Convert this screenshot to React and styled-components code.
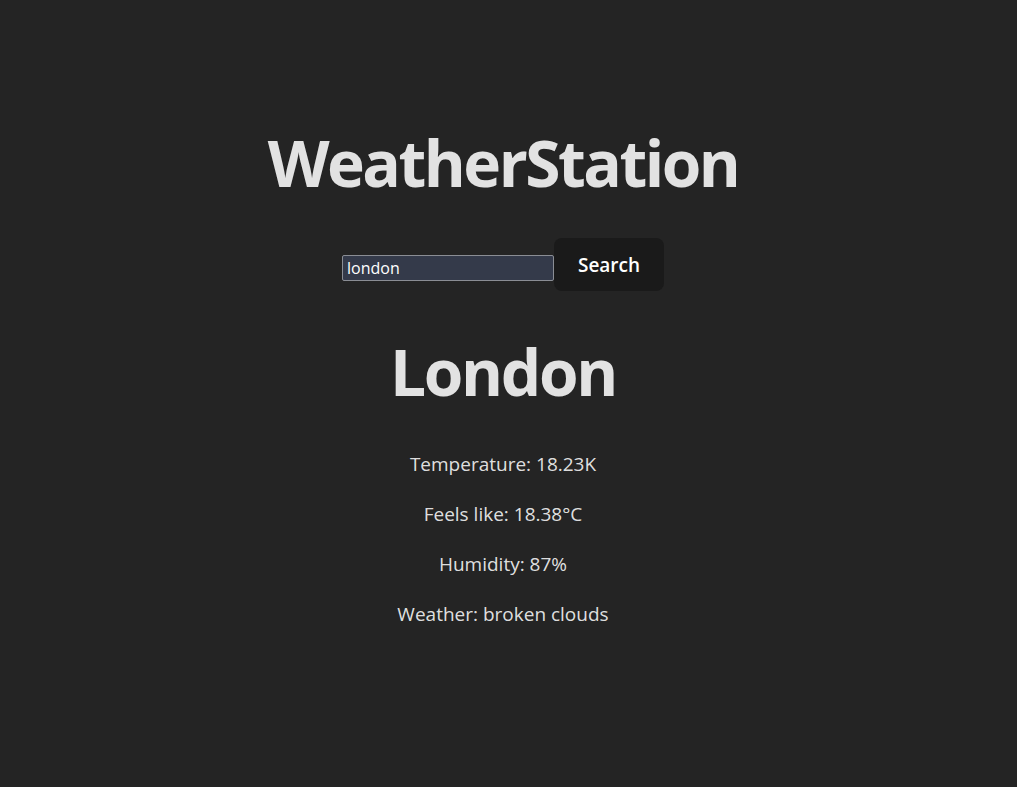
import React from "react";
import styled, { createGlobalStyle } from "styled-components";

const Global = createGlobalStyle`
  html, body { margin: 0; padding: 0; }
  body {
    background: #242424;
    color: rgba(255,255,255,0.87);
    font-family: "Open Sans", "Noto Sans", sans-serif;
    font-size: 20px;
    line-height: 1.5;
    min-height: 100vh;
  }
`;

const Page = styled.main`
  display: flex;
  flex-direction: column;
  align-items: center;
  padding: 128px 11px 0 0;
  text-align: center;
`;

const Title = styled.h1`
  font-size: 64px;
  line-height: 1.1;
  font-weight: 700;
  margin: 0 0 40px;
  letter-spacing: -2.5px;
`;

const Form = styled.form`
  display: flex;
  align-items: center;
`;

const Input = styled.input`
  width: 212px;
  height: 26px;
  margin-top: 7px;
  box-sizing: border-box;
  background: #343a4a;
  border: 1px solid #8a8d94;
  border-radius: 2px;
  color: #fff;
  font-family: "Open Sans", sans-serif;
  font-size: 16px;
  padding: 0 4px;
  outline: none;
`;

const Button = styled.button`
  width: 110px;
  height: 53px;
  border: 1px solid transparent;
  border-radius: 8px;
  background: #1a1a1a;
  color: #fff;
  font-family: "Open Sans", sans-serif;
  font-size: 19px;
  font-weight: 600;
  cursor: pointer;
`;

const City = styled.h2`
  font-size: 64px;
  line-height: 1.1;
  font-weight: 700;
  margin: 46px 0 41px;
  letter-spacing: -2.3px;
`;

const Info = styled.p`
  margin: 0 0 20px;
  font-size: 19px;
  line-height: 30px;
`;

export default function App() {
  return (
    <>
      <Global />
      <Page>
        <Title>WeatherStation</Title>
        <Form onSubmit={(e) => e.preventDefault()}>
          <Input defaultValue="london" />
          <Button type="submit">Search</Button>
        </Form>
        <City>London</City>
        <Info>Temperature: 18.23K</Info>
        <Info>Feels like: 18.38°C</Info>
        <Info>Humidity: 87%</Info>
        <Info>Weather: broken clouds</Info>
      </Page>
    </>
  );
}
